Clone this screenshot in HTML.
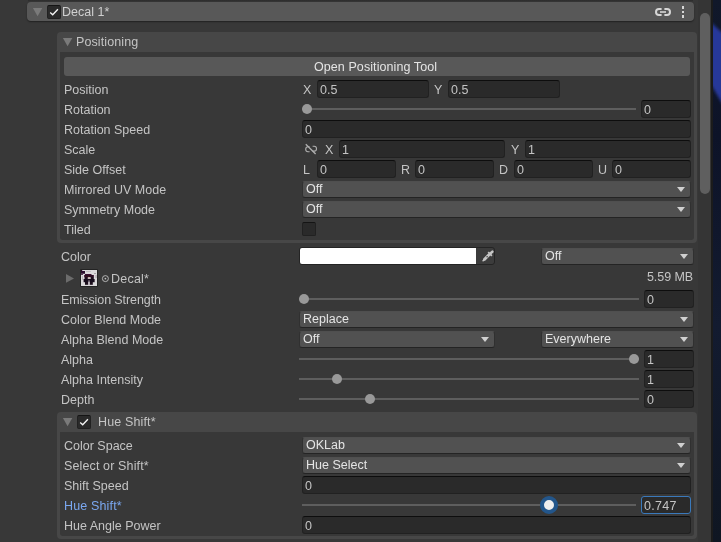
<!DOCTYPE html>
<html><head><meta charset="utf-8">
<style>
html,body{margin:0;padding:0;}
body{width:721px;height:542px;overflow:hidden;background:#383838;position:relative;font-family:"Liberation Sans",sans-serif;font-size:12.5px;color:#c4c4c4;}
.a{position:absolute;}
.t,.f span,.dd span{will-change:transform}
.t{position:absolute;white-space:nowrap;line-height:16px;height:16px;}
.hdr{position:absolute;background:#585858;border-radius:4px;}
.box{position:absolute;background:#474747;border-radius:4px;}
.body{position:absolute;background:#383838;border-radius:0 0 3px 3px;}
.f{position:absolute;background:#2a2a2a;border:1px solid #212121;border-top-color:#0d0d0d;border-radius:3px;box-sizing:border-box;height:18px;}
.f span{position:absolute;left:2.3px;top:1px;line-height:16px;}
.dd{position:absolute;background:#515151;border:1px solid #303030;border-top-color:#4f4f4f;border-bottom-color:#242424;border-radius:3px;box-sizing:border-box;height:17px;}
.dd span{position:absolute;left:3px;top:-1px;line-height:16px;color:#e4e4e4}
.dd i{position:absolute;right:5px;top:5px;width:0;height:0;border-left:4px solid transparent;border-right:4px solid transparent;border-top:5px solid #d0d0d0;}
.tr{position:absolute;height:2px;background:#5e5e5e;}
.kn{position:absolute;width:10px;height:10px;border-radius:50%;background:#999;}
.tri{position:absolute;width:0;height:0;margin-left:-0.2px;border-left:4.75px solid transparent;border-right:4.75px solid transparent;border-top:8.4px solid #7a7a7a;}
.cb{position:absolute;width:14px;height:14px;background:#2a2a2a;border:1px solid #212121;border-top-color:#141414;border-radius:2px;box-sizing:border-box;}
</style></head><body>
<div class="a" style="left:28px;top:0;width:665px;height:2px;background:linear-gradient(#2b2b2b,#383838)"></div>
<div class="hdr" style="left:27px;top:2px;width:667px;height:19px;box-shadow:0 1px 1.5px rgba(0,0,0,.42)"></div>
<svg class="a" style="left:32.0px;top:8.0px" width="12" height="10" viewBox="0 0 12 10"><polygon points="0.9,0 10.3,0 5.6,8.2" fill="#7a7a7a"/></svg>
<div class="cb" style="left:47px;top:5px;"></div>
<svg class="a" style="left:47px;top:5px" width="14" height="14" viewBox="0 0 14 14"><path d="M3.2 7.5 L5.7 9.8 L10.9 4.2" fill="none" stroke="#f4f4f4" stroke-width="1.35"/></svg>
<div class="t" style="left:62px;top:4px;color:#d0d0d0">Decal 1*</div>
<svg class="a" style="left:654px;top:6px" width="18" height="12" viewBox="0 0 18 12"><path d="M7.6 3H5a3 3 0 0 0 0 6h2.6M10.4 3H13a3 3 0 0 1 0 6h-2.6" fill="none" stroke="#d6d6d6" stroke-width="2"/><path d="M6 6h6" fill="none" stroke="#d6d6d6" stroke-width="1.6"/></svg>
<div class="a" style="left:682px;top:6.2px;width:2.3px;height:2.7px;background:#d6d6d6"></div>
<div class="a" style="left:682px;top:11px;width:2.3px;height:2px;background:#d6d6d6"></div>
<div class="a" style="left:682px;top:15.2px;width:2.3px;height:2.7px;background:#d6d6d6"></div>
<div class="a" style="left:698px;top:0;width:13px;height:542px;background:#353535"></div>
<div class="a" style="left:700px;top:13px;width:10px;height:181px;background:#5f5f5f;border-radius:5px"></div>
<div class="a" style="left:711px;top:0;width:2px;height:542px;background:#1b1b1b"></div>
<svg class="a" style="left:713px;top:0" width="8" height="542" viewBox="0 0 8 542"><defs><filter id="bl" x="-50%" y="-10%" width="200%" height="120%"><feGaussianBlur stdDeviation="1.6"/></filter><linearGradient id="ng" x1="0" y1="0" x2="0" y2="1"><stop offset="0" stop-color="#11182a"/><stop offset="0.25" stop-color="#0d1328"/><stop offset="0.6" stop-color="#131b30"/><stop offset="1" stop-color="#0f1622"/></linearGradient></defs><rect width="8" height="542" fill="url(#ng)"/><polygon points="-2,22.5 10,33.5 10,105 -2,84.5" fill="#28389a" filter="url(#bl)"/></svg>
<div class="box" style="left:57px;top:32px;width:640px;height:211px;"></div>
<div class="body" style="left:60px;top:52px;width:634px;height:188px;"></div>
<svg class="a" style="left:62.0px;top:38.0px" width="12" height="10" viewBox="0 0 12 10"><polygon points="0.9,0 10.3,0 5.6,8.2" fill="#7a7a7a"/></svg>
<div class="t" style="left:76px;top:34px;letter-spacing:0.1px">Positioning</div>
<div class="hdr" style="left:64px;top:57px;width:626px;height:19px;border-radius:3px"></div>
<div class="t" style="left:314px;top:59px;color:#e4e4e4;letter-spacing:0.08px">Open Positioning Tool</div>
<div class="t" style="left:64px;top:82px;">Position</div>
<div class="t" style="left:303px;top:82px;">X</div>
<div class="f" style="left:317px;top:80px;width:112px;"><span>0.5</span></div>
<div class="t" style="left:434.3px;top:82px;">Y</div>
<div class="f" style="left:448px;top:80px;width:112px;"><span>0.5</span></div>
<div class="t" style="left:64px;top:102px;">Rotation</div>
<div class="tr" style="left:302px;top:108px;width:334px"></div>
<div class="kn" style="left:302px;top:104px"></div>
<div class="f" style="left:641px;top:100px;width:50px;"><span>0</span></div>
<div class="t" style="left:64px;top:122px;">Rotation Speed</div>
<div class="f" style="left:302px;top:120px;width:389px;"><span>0</span></div>
<div class="t" style="left:64px;top:142px;">Scale</div>
<svg class="a" style="left:303px;top:142px" width="16" height="14" viewBox="0 0 16 14"><g fill="none" stroke="#b0b0b0"><path d="M6.6 4.7H5A2.3 2.5 0 0 0 5 9.7H6.6M9.6 4.3H11.2A2.3 2.4 0 0 1 11.2 9.1H9.6" stroke-width="1.1"/><path d="M2.8 2.2L12.6 12" stroke-width="1.3"/></g></svg>
<div class="t" style="left:325px;top:142px;">X</div>
<div class="f" style="left:339px;top:140px;width:166px;"><span>1</span></div>
<div class="t" style="left:511.3px;top:142px;">Y</div>
<div class="f" style="left:525px;top:140px;width:166px;"><span>1</span></div>
<div class="t" style="left:64px;top:162px;">Side Offset</div>
<div class="t" style="left:303px;top:162px;">L</div>
<div class="f" style="left:317px;top:160px;width:79px;"><span>0</span></div>
<div class="t" style="left:401px;top:162px;">R</div>
<div class="f" style="left:415px;top:160px;width:79px;"><span>0</span></div>
<div class="t" style="left:499.3px;top:162px;">D</div>
<div class="f" style="left:514px;top:160px;width:79px;"><span>0</span></div>
<div class="t" style="left:598.3px;top:162px;">U</div>
<div class="f" style="left:612px;top:160px;width:79px;"><span>0</span></div>
<div class="t" style="left:64px;top:182px;">Mirrored UV Mode</div>
<div class="dd" style="left:302px;top:181px;width:389px"><span>Off</span><i></i></div>
<div class="t" style="left:64px;top:202px;">Symmetry Mode</div>
<div class="dd" style="left:302px;top:201px;width:389px"><span>Off</span><i></i></div>
<div class="t" style="left:64px;top:222px;">Tiled</div>
<div class="cb" style="left:302px;top:222px;"></div>
<div class="t" style="left:61px;top:249px;">Color</div>
<div class="a" style="left:299px;top:247px;width:196px;height:18px;background:#3c3c3c;border:1px solid #242424;border-radius:3px;box-sizing:border-box"></div>
<div class="a" style="left:300px;top:248px;width:176px;height:16px;background:#fff;border-radius:2px 0 0 2px"></div>
<svg class="a" style="left:478.6px;top:248px" width="16" height="15" viewBox="0 0 16 15"><g stroke="#c6c6c6" fill="none"><path d="M5.6 11.2L10 6.8" stroke-width="3" stroke-linecap="round"/><path d="M4.1 12.7L6 10.8" stroke-width="1.6" stroke-linecap="round"/><path d="M9.2 4.2L12.9 7.8" stroke-width="1.8"/><path d="M11.6 5.4L13.4 3.6" stroke-width="2.6" stroke-linecap="round"/></g><circle cx="8.1" cy="8.8" r="0.75" fill="#3a3a3a"/></svg>
<div class="dd" style="left:541px;top:248px;width:153px"><span>Off</span><i></i></div>
<svg class="a" style="left:65px;top:273px" width="11" height="11" viewBox="0 0 11 11"><polygon points="1,1 9,5.4 1,9.8" fill="#6c6c6c"/></svg>
<svg class="a" style="left:80px;top:269px" width="18" height="18" viewBox="0 0 18 18"><defs><filter id="b2" x="-10%" y="-10%" width="120%" height="120%"><feGaussianBlur stdDeviation="0.55"/></filter><clipPath id="cp"><rect x="1" y="1" width="16" height="16"/></clipPath></defs><rect width="18" height="18" rx="1" fill="#232323"/><rect x="1" y="1" width="16" height="16" fill="#dad8da"/><g clip-path="url(#cp)"><g filter="url(#b2)"><rect x="1" y="1" width="1.2" height="1" fill="#2a0a2a"/><rect x="1" y="2" width="4" height="2.8" fill="#2c0a2e"/><rect x="1" y="4.8" width="2" height="1.2" fill="#5a3a58"/><rect x="5" y="5" width="6.5" height="1.2" fill="#3a1030"/><rect x="4.2" y="6" width="9.6" height="2.2" fill="#2a0820"/><rect x="5.6" y="7.6" width="1" height="1" fill="#7a3020"/><rect x="8.2" y="7.6" width="1" height="1" fill="#7a3020"/><rect x="4.6" y="8" width="3.2" height="2.2" fill="#1e0a1e"/><rect x="10.6" y="8" width="3.2" height="2.2" fill="#1e0a1e"/><rect x="8" y="8.2" width="2.2" height="1.8" fill="#c8b8b8"/><rect x="3.6" y="10" width="11" height="3.2" fill="#16081a"/><rect x="8.2" y="11.4" width="1.6" height="1.6" fill="#8a808a"/><rect x="5" y="13" width="3" height="2.8" fill="#1a0a1c"/><rect x="9.8" y="13" width="3" height="2.8" fill="#1a0a1c"/><rect x="8" y="13" width="1.8" height="3" fill="#b8b0b8"/><rect x="14" y="4" width="2" height="1" fill="#a8a4a8"/><rect x="15.5" y="6" width="1.2" height="3" fill="#b0a8b0"/><rect x="2" y="7" width="1" height="4" fill="#b8b4b8"/><rect x="6" y="2" width="5" height="1" fill="#c0bcc0"/></g></g></svg>
<svg class="a" style="left:101px;top:274px" width="9" height="9" viewBox="0 0 9 9"><circle cx="4.4" cy="4.6" r="3" fill="none" stroke="#c0c0c0" stroke-width="0.9"/><circle cx="4.4" cy="4.6" r="0.9" fill="#c0c0c0"/></svg>
<div class="t" style="left:111.3px;top:271px;letter-spacing:0.22px">Decal*</div>
<div class="t" style="left:647px;top:269px;letter-spacing:-0.08px">5.59 MB</div>
<div class="t" style="left:61px;top:292px;letter-spacing:-0.09px">Emission Strength</div>
<div class="tr" style="left:299px;top:298px;width:340px"></div>
<div class="kn" style="left:299px;top:294px"></div>
<div class="f" style="left:644px;top:290px;width:50px;"><span>0</span></div>
<div class="t" style="left:61px;top:312px;">Color Blend Mode</div>
<div class="dd" style="left:299px;top:311px;width:395px"><span>Replace</span><i></i></div>
<div class="t" style="left:61px;top:332px;">Alpha Blend Mode</div>
<div class="dd" style="left:299px;top:331px;width:196px"><span>Off</span><i></i></div>
<div class="dd" style="left:541px;top:331px;width:153px"><span>Everywhere</span><i></i></div>
<div class="t" style="left:61px;top:352px;">Alpha</div>
<div class="tr" style="left:299px;top:358px;width:340px"></div>
<div class="kn" style="left:629px;top:354px"></div>
<div class="f" style="left:644px;top:350px;width:50px;"><span>1</span></div>
<div class="t" style="left:61px;top:372px;">Alpha Intensity</div>
<div class="tr" style="left:299px;top:378px;width:340px"></div>
<div class="kn" style="left:332px;top:374px"></div>
<div class="f" style="left:644px;top:370px;width:50px;"><span>1</span></div>
<div class="t" style="left:61px;top:392px;">Depth</div>
<div class="tr" style="left:299px;top:398px;width:340px"></div>
<div class="kn" style="left:365px;top:394px"></div>
<div class="f" style="left:644px;top:390px;width:50px;"><span>0</span></div>
<div class="box" style="left:57px;top:412px;width:640px;height:127px;"></div>
<div class="body" style="left:60px;top:432px;width:634px;height:104px;"></div>
<svg class="a" style="left:62.0px;top:418.0px" width="12" height="10" viewBox="0 0 12 10"><polygon points="0.9,0 10.3,0 5.6,8.2" fill="#7a7a7a"/></svg>
<div class="cb" style="left:77px;top:415px;"></div>
<svg class="a" style="left:77px;top:415px" width="14" height="14" viewBox="0 0 14 14"><path d="M3.2 7.5 L5.7 9.8 L10.9 4.2" fill="none" stroke="#f4f4f4" stroke-width="1.35"/></svg>
<div class="t" style="left:98px;top:414px;letter-spacing:0.14px">Hue Shift*</div>
<div class="t" style="left:64px;top:438px;">Color Space</div>
<div class="dd" style="left:302px;top:437px;width:389px"><span>OKLab</span><i></i></div>
<div class="t" style="left:64px;top:458px;letter-spacing:0.13px">Select or Shift*</div>
<div class="dd" style="left:302px;top:457px;width:389px"><span>Hue Select</span><i></i></div>
<div class="t" style="left:64px;top:478px;">Shift Speed</div>
<div class="f" style="left:302px;top:476px;width:389px;"><span>0</span></div>
<div class="t" style="left:64px;top:498px;color:#7aa7f0;letter-spacing:0.15px">Hue Shift*</div>
<div class="tr" style="left:302px;top:504px;width:334px"></div>
<div class="a" style="left:540px;top:496px;width:18px;height:18px;border-radius:50%;background:#eee;border:4px solid #23568b;box-sizing:border-box"></div>
<div class="f" style="left:641px;top:496px;width:50px;border-color:#3a79bb;letter-spacing:0.3px"><span>0.747</span></div>
<div class="t" style="left:64px;top:518px;">Hue Angle Power</div>
<div class="f" style="left:302px;top:516px;width:389px;"><span>0</span></div>
</body></html>
